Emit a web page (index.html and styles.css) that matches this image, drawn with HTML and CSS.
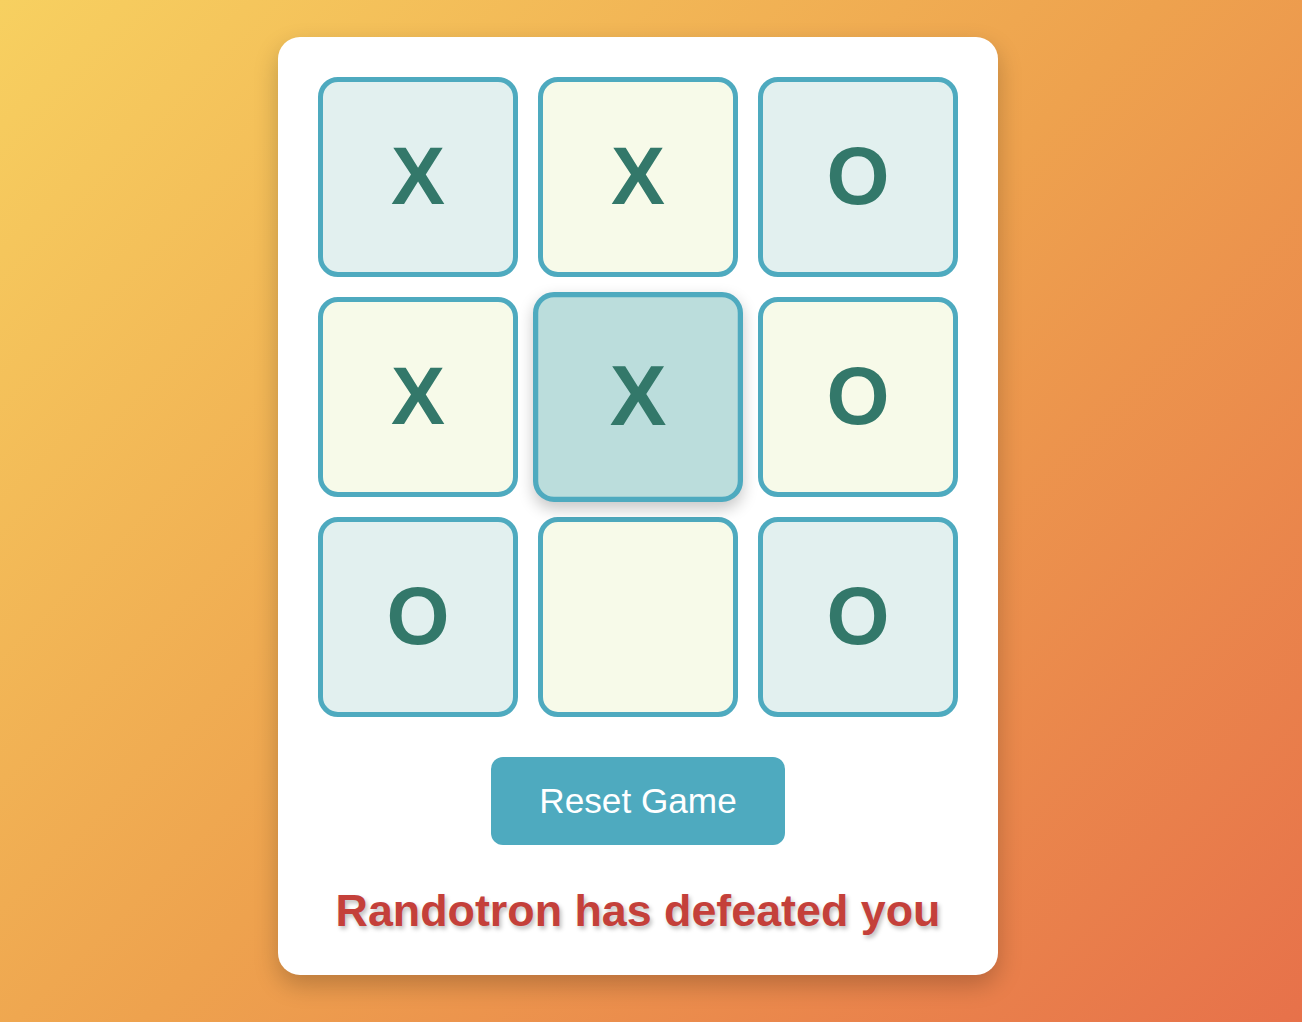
FILE: index.html
```html
<!DOCTYPE html>
<html lang="en">
<head>
<meta charset="utf-8">
<title>Tic Tac Toe</title>
<link rel="stylesheet" href="styles.css">
</head>
<body>
<main class="card">
  <div class="board">
    <div class="cell cell-a">X</div>
    <div class="cell cell-b">X</div>
    <div class="cell cell-a">O</div>
    <div class="cell cell-b">X</div>
    <div class="cell cell-a cell-hover">X</div>
    <div class="cell cell-b">O</div>
    <div class="cell cell-a">O</div>
    <div class="cell cell-b"></div>
    <div class="cell cell-a">O</div>
  </div>
  <button class="reset">Reset Game</button>
  <p class="status">Randotron has defeated you</p>
</main>
</body>
</html>
```

FILE: styles.css
```css
html, body {
  margin: 0;
  height: 100%;
}
body {
  background: linear-gradient(135deg, #f7d060 0%, #eea24e 50%, #e7714a 100%);
  font-family: "Liberation Sans", Arial, sans-serif;
  display: flex;
  align-items: flex-start;
}
.card {
  margin: 37px 0 0 278px;
  width: 720px;
  box-sizing: border-box;
  padding: 40px 40px 39px;
  background: #ffffff;
  border-radius: 22px;
  box-shadow: 0 10px 25px rgba(0, 0, 0, 0.22);
  display: flex;
  flex-direction: column;
  align-items: center;
}
.board {
  display: grid;
  grid-template-columns: repeat(3, 200px);
  grid-template-rows: repeat(3, 200px);
  gap: 20px;
}
.cell {
  box-sizing: border-box;
  border: 5px solid #4eaabf;
  border-radius: 20px;
  display: flex;
  align-items: center;
  justify-content: center;
  font-size: 81px;
  font-weight: 700;
  color: #33786a;
  padding-bottom: 2px;
}
.cell-a { background: #e2f0ef; }
.cell-b { background: #f7fae9; }
.cell-hover {
  background: #bbdddc;
  transform: scale(1.05);
  box-shadow: 0 6px 14px rgba(0, 0, 0, 0.22);
}
.reset {
  margin-top: 40px;
  border: none;
  border-radius: 12px;
  background: #4eaabf;
  color: #ffffff;
  font-family: "Liberation Sans", Arial, sans-serif;
  font-size: 35.2px;
  padding: 24px 48px;
  line-height: 1.15;
}
.status {
  margin: 40px 0 0;
  color: #c4403a;
  font-size: 44.8px;
  font-weight: 700;
  text-shadow: 2px 3px 4px rgba(0, 0, 0, 0.25);
}
```
